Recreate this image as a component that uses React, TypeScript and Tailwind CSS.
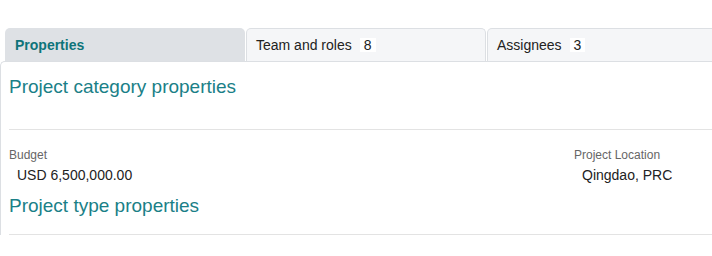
const tabs = [
  { label: "Properties", count: null as number | null, active: true },
  { label: "Team and roles", count: 8, active: false },
  { label: "Assignees", count: 3, active: false },
];

export default function App() {
  return (
    <div className="h-[256px] w-[712px] overflow-hidden bg-white font-['Liberation_Sans',Arial,sans-serif]">
      {/* Tabs */}
      <div className="flex gap-[1px] pl-[5px] pt-[28px]">
        {tabs.map((t) =>
          t.active ? (
            <div
              key={t.label}
              className="flex h-[33px] w-[240px] shrink-0 items-center rounded-t-[5px] bg-[#dee1e5] px-[10px] text-[14px] leading-[20px] font-bold text-[#0e747a]"
            >
              {t.label}
            </div>
          ) : (
            <div
              key={t.label}
              className="flex h-[33px] w-[240px] shrink-0 items-center gap-[8px] rounded-t-[5px] border border-b-0 border-[#dcdfe3] bg-[#f5f6f8] px-[9px] text-[14px] leading-[20px] text-[#222]"
            >
              <span>{t.label}</span>
              <span className="bg-white px-[4px] leading-[14px]">{t.count}</span>
            </div>
          )
        )}
      </div>

      {/* Panel */}
      <div className="w-[1140px] rounded-tl-[5px] border-l border-t border-[#dcdfe3] pl-[8px] pt-[13px]">
        <h2 className="text-[19px] leading-[24px] font-normal text-[#1a8087]">
          Project category properties
        </h2>
        <div className="mt-[30px] border-t border-[#e3e3e3]" />
        <div className="grid grid-cols-[565px_1fr] pt-[17px]">
          <div>
            <div className="text-[12px] leading-[16px] text-[#666]">Budget</div>
            <div className="mt-[2px] pl-[8px] text-[14px] leading-[20px] text-[#222]">
              USD 6,500,000.00
            </div>
          </div>
          <div>
            <div className="text-[12px] leading-[16px] text-[#666]">Project Location</div>
            <div className="mt-[2px] pl-[8px] text-[14px] leading-[20px] text-[#222]">
              Qingdao, PRC
            </div>
          </div>
        </div>
        <h2 className="mt-[9px] text-[19px] leading-[24px] font-normal text-[#1a8087]">
          Project type properties
        </h2>
        <div className="mt-[16px] border-t border-[#e3e3e3]" />
      </div>
    </div>
  );
}
